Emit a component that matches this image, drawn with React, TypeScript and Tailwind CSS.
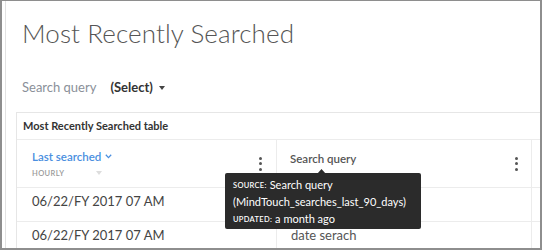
import React from 'react';

const Dots: React.FC = () => (
  <div className="flex flex-col items-center gap-[2.5px]">
    <span className="w-[3px] h-[3px] rounded-full bg-[#555]" />
    <span className="w-[3px] h-[3px] rounded-full bg-[#555]" />
    <span className="w-[3px] h-[3px] rounded-full bg-[#555]" />
  </div>
);

const App: React.FC = () => {
  const rows = [
    { date: '06/22/FY 2017 07 AM', query: '' },
    { date: '06/22/FY 2017 07 AM', query: 'date serach' },
  ];

  return (
    <div
      className="relative w-[542px] h-[250px] overflow-hidden bg-white border-t border-l-2 border-r-2 border-b-2 border-[#8e8e8e]"
      style={{ fontFamily: 'Lato, "Open Sans", sans-serif' }}
    >
      <div className="h-full ml-[3px] border-l border-[#e2e2e2] pl-[10px]">
        <h1 className="ml-[6px] pt-[18px] text-[26px] leading-[29px] font-light text-[#555] tracking-[0.1px]">
          Most Recently Searched
        </h1>
        <div className="ml-[6px] mt-[32px] flex items-center h-[16px] text-[13px]">
          <span className="text-[#8a9099]">Search query</span>
          <span className="ml-[14px] font-bold text-[#333]">(Select)</span>
          <svg className="ml-[6px]" width="6" height="4" viewBox="0 0 6 4">
            <path d="M0 0h6L3 4z" fill="#444" />
          </svg>
        </div>
        <div className="mt-[16px] w-[600px] border border-[#e6e6e6]">
          <div className="h-[26px] px-[6px] flex items-center text-[11px] font-bold text-[#333]">
            Most Recently Searched table
          </div>
          <div className="grid grid-cols-[260px_255px_1fr] border-t border-[#ececec]">
            <div className="h-[47px] border-r border-[#ececec] pl-[15px] pr-[14px] flex items-center">
              <div className="flex-1 flex flex-col">
                <div className="flex items-center text-[11.5px] font-semibold text-[#4a8fe0]">
                  Last searched
                  <svg className="ml-[4px]" width="7" height="5" viewBox="0 0 7 5">
                    <path d="M0.8 0.8L3.5 3.6L6.2 0.8" stroke="#4a8fe0" strokeWidth="1.3" fill="none" />
                  </svg>
                </div>
                <div className="flex items-center mt-[2px]">
                  <span className="text-[7.5px] font-semibold tracking-[0.4px] text-[#999]">HOURLY</span>
                  <svg className="ml-[32px]" width="6" height="4" viewBox="0 0 6 4">
                    <path d="M0 0h6L3 4z" fill="#ddd" />
                  </svg>
                </div>
              </div>
              <Dots />
            </div>
            <div className="h-[47px] border-r border-[#ececec] pl-[13px] pr-[13px] flex items-center justify-between">
              <span className="text-[11.5px] font-semibold text-[#555] -mt-[9px]">Search query</span>
              <Dots />
            </div>
            <div className="h-[47px]" />
            {rows.map((r, i) => (
              <React.Fragment key={i}>
                <div className="h-[34px] border-t border-r border-[#ececec] pl-[15px] pb-[5px] flex items-center text-[13px] text-[#444]">
                  {r.date}
                </div>
                <div className="h-[34px] border-t border-r border-[#ececec] pl-[14px] pb-[5px] flex items-center text-[13px] text-[#555]">
                  {r.query}
                </div>
                <div className="h-[34px] border-t border-[#ececec]" />
              </React.Fragment>
            ))}
          </div>
        </div>
      </div>

      <div className="absolute left-[223px] top-[172px] w-[196px] h-[56px] rounded-[2px] bg-[#2b2b2b] px-[8px] pt-[4px] text-white">
        <svg className="absolute -top-[4px] left-[92px]" width="9" height="5" viewBox="0 0 9 5">
          <path d="M0 5L4.5 0L9 5z" fill="#2b2b2b" />
        </svg>
        <div className="h-[17px] flex items-center text-[11px]">
          <span className="text-[7.5px] font-semibold tracking-[0.3px] mr-[3px]">SOURCE:</span>
          Search query
        </div>
        <div className="h-[17px] flex items-center text-[11px]">(MindTouch_searches_last_90_days)</div>
        <div className="h-[17px] flex items-center text-[11px]">
          <span className="text-[7.5px] font-semibold tracking-[0.3px] mr-[3px]">UPDATED:</span>
          a month ago
        </div>
      </div>
    </div>
  );
};

export default App;
